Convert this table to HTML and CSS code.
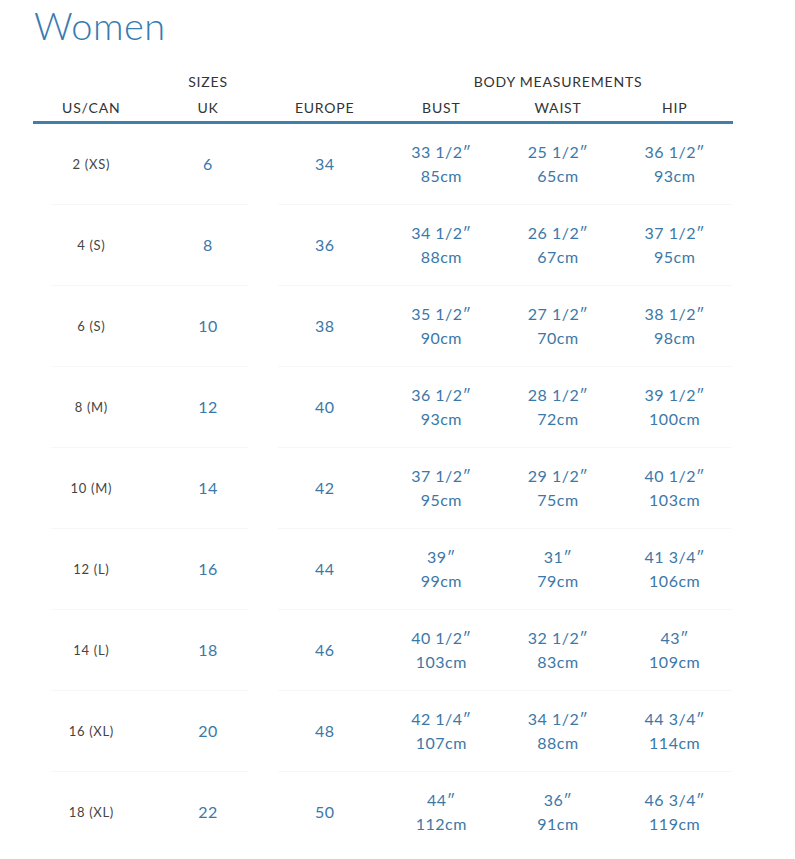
FILE: index.html
```html
<!DOCTYPE html>
<html lang="en">
<head>
<meta charset="utf-8">
<title>Women size chart</title>
<link rel="stylesheet" href="styles.css">
</head>
<body>
<div class="chart">
  <h1 class="title">Women</h1>
  <div class="head">
    <div class="row group">
      <div></div><div>SIZES</div><div></div><div></div><div>BODY MEASUREMENTS</div><div></div>
    </div>
    <div class="row cols">
      <div>US/CAN</div><div>UK</div><div>EUROPE</div><div>BUST</div><div>WAIST</div><div>HIP</div>
    </div>
  </div>
  <div class="body">
    <div class="row item"><div class="us">2 (XS)</div><div>6</div><div>34</div><div>33 1/2″<br>85cm</div><div>25 1/2″<br>65cm</div><div>36 1/2″<br>93cm</div></div>
    <div class="row item"><div class="us">4 (S)</div><div>8</div><div>36</div><div>34 1/2″<br>88cm</div><div>26 1/2″<br>67cm</div><div>37 1/2″<br>95cm</div></div>
    <div class="row item"><div class="us">6 (S)</div><div>10</div><div>38</div><div>35 1/2″<br>90cm</div><div>27 1/2″<br>70cm</div><div>38 1/2″<br>98cm</div></div>
    <div class="row item"><div class="us">8 (M)</div><div>12</div><div>40</div><div>36 1/2″<br>93cm</div><div>28 1/2″<br>72cm</div><div>39 1/2″<br>100cm</div></div>
    <div class="row item"><div class="us">10 (M)</div><div>14</div><div>42</div><div>37 1/2″<br>95cm</div><div>29 1/2″<br>75cm</div><div>40 1/2″<br>103cm</div></div>
    <div class="row item"><div class="us">12 (L)</div><div>16</div><div>44</div><div>39″<br>99cm</div><div>31″<br>79cm</div><div>41 3/4″<br>106cm</div></div>
    <div class="row item"><div class="us">14 (L)</div><div>18</div><div>46</div><div>40 1/2″<br>103cm</div><div>32 1/2″<br>83cm</div><div>43″<br>109cm</div></div>
    <div class="row item"><div class="us">16 (XL)</div><div>20</div><div>48</div><div>42 1/4″<br>107cm</div><div>34 1/2″<br>88cm</div><div>44 3/4″<br>114cm</div></div>
    <div class="row item"><div class="us">18 (XL)</div><div>22</div><div>50</div><div>44″<br>112cm</div><div>36″<br>91cm</div><div>46 3/4″<br>119cm</div></div>
  </div>
</div>
</body>
</html>
```
FILE: styles.css
```css
html, body {
  margin: 0;
  padding: 0;
  background: #ffffff;
}
body {
  font-family: Lato, "Open Sans", Arial, sans-serif;
}
.chart {
  width: 700px;
  padding: 2px 0 0 33px;
}
.title {
  margin: 0;
  font-weight: 300;
  font-size: 38px;
  line-height: 46px;
  color: #3a7bb0;
  padding-left: 1px;
  letter-spacing: 0.5px;
}
.head {
  margin-top: 20px;
  border-bottom: 3px solid #3f7fae;
  padding-bottom: 1px;
}
.row {
  display: grid;
  grid-template-columns: repeat(6, minmax(0, 1fr));
  text-align: center;
}
.head .row {
  height: 26px;
  align-items: center;
  font-size: 14px;
  color: #333333;
  letter-spacing: 0.8px;
}
.group > div {
  white-space: nowrap;
  display: flex;
  justify-content: center;
}
.item {
  height: 81px;
  box-sizing: border-box;
  padding-bottom: 1px;
  align-items: center;
  color: #3b78a8;
  font-size: 16px;
  line-height: 24px;
  letter-spacing: 0.5px;
  background:
    linear-gradient(#f7f7f7, #f7f7f7) 18px 100% / 198px 1px no-repeat,
    linear-gradient(#f7f7f7, #f7f7f7) 245px 100% / 454px 1px no-repeat;
}
.item:last-child {
  background: none;
}
.item .us {
  color: #444444;
  font-size: 13px;
  letter-spacing: 0.7px;
}
```
